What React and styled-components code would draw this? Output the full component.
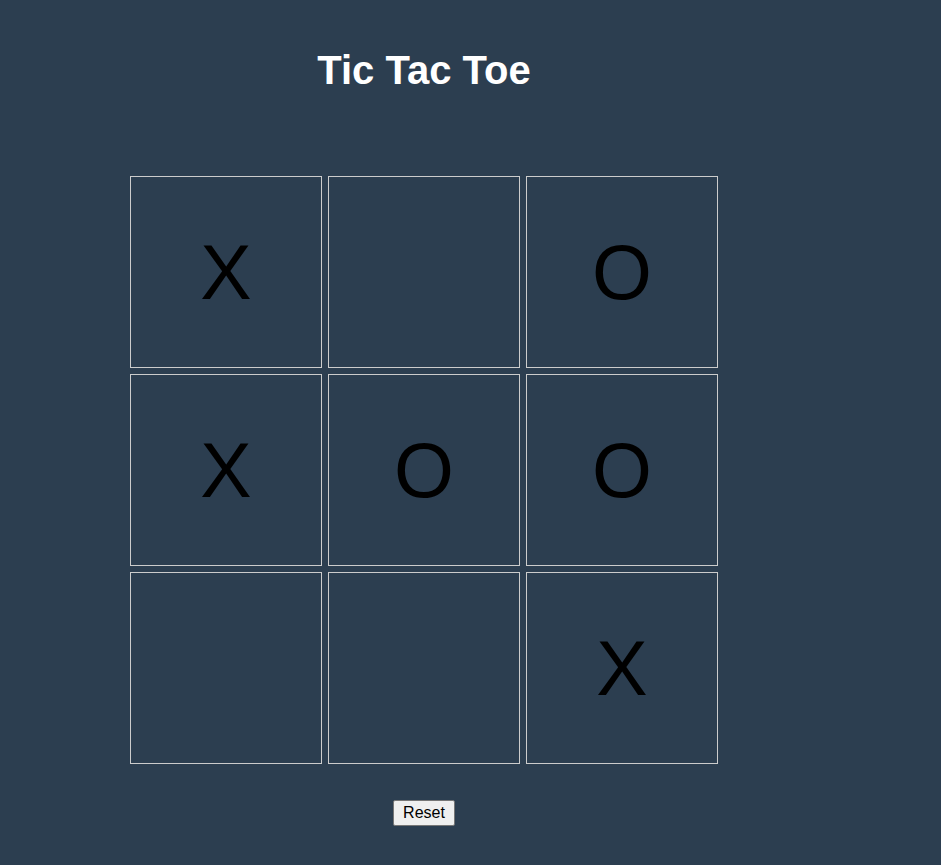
import React, { useState } from 'react'
import styled, { createGlobalStyle } from 'styled-components'

const GlobalStyle = createGlobalStyle`
  body {
    margin: 0;
    background: #2c3e50;
    font-family: "Liberation Sans", Arial, sans-serif;
  }
`

const Wrapper = styled.div`
  width: 848px;
  min-height: 865px;
  display: flex;
  flex-direction: column;
  align-items: center;
`

const Title = styled.h1`
  margin: 48px 0 83px;
  font-size: 40px;
  font-weight: bold;
  color: #ffffff;
`

const Board = styled.div`
  display: grid;
  grid-template-columns: repeat(3, 192px);
  grid-auto-rows: 192px;
  gap: 6px;
`

const Cell = styled.div`
  box-sizing: border-box;
  border: 1px solid #cccccc;
  display: flex;
  align-items: center;
  justify-content: center;
  font-size: 77px;
  color: #000000;
  cursor: pointer;
`

const ResetButton = styled.button`
  margin-top: 36px;
  font-family: "Liberation Sans", Arial, sans-serif;
  font-size: 16px;
  padding: 3px 9px;
  background: #efefef;
  border: 1px solid #767676;
  border-radius: 2px;
  color: #000;
`

const initial = ['X', '', 'O', 'X', 'O', 'O', '', '', 'X']

export default function App() {
  const [cells, setCells] = useState(initial)

  return (
    <Wrapper>
      <GlobalStyle />
      <Title>Tic Tac Toe</Title>
      <Board>
        {cells.map((value, i) => (
          <Cell key={i}>{value}</Cell>
        ))}
      </Board>
      <ResetButton onClick={() => setCells(Array(9).fill(''))}>Reset</ResetButton>
    </Wrapper>
  )
}
